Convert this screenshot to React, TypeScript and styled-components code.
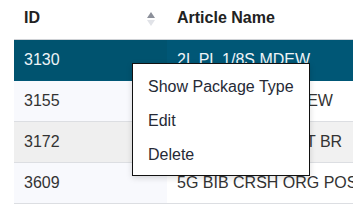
import styled, { createGlobalStyle } from "styled-components";

const GlobalStyle = createGlobalStyle`
  html, body {
    margin: 0;
    padding: 0;
    background: #fff;
    overflow: hidden;
  }
  body {
    font-family: "Liberation Sans", Arial, sans-serif;
  }
`;

type Row = { id: string; name: string };

const rows: Row[] = [
  { id: "3130", name: "2L PL 1/8S MDEW" },
  { id: "3155", name: "20OZ PL 1/8S MDEW" },
  { id: "3172", name: "20OZ PL 1/8 SQRT BR" },
  { id: "3609", name: "5G BIB CRSH ORG POS MIX" },
];

const SortIcon = () => (
  <svg width="8" height="16" viewBox="0 0 8 16">
    <polygon points="4,1 8,7 0,7" fill="#8c909a" />
    <polygon points="0,9 8,9 4,15" fill="#e1e3e8" />
  </svg>
);

const App = () => {
  return (
    <Page>
      <GlobalStyle />
      <Table>
        <HeaderRow>
          <HeadCell>
            ID
            <SortIcon />
          </HeadCell>
          <HeadCell>Article Name</HeadCell>
        </HeaderRow>
        {rows.map((r, i) => (
          <BodyRow key={r.id} $selected={i === 0} $hover={i === 2}>
            <IdCell>{r.id}</IdCell>
            <NameCell>{r.name}</NameCell>
          </BodyRow>
        ))}
        <Menu>
          <MenuItem>Show Package Type</MenuItem>
          <MenuItem>Edit</MenuItem>
          <MenuItem>Delete</MenuItem>
        </Menu>
      </Table>
    </Page>
  );
};

export default App;

const Page = styled.div`
  padding-left: 14px;
  width: 600px;
`;

const Table = styled.div`
  position: relative;
  width: 520px;
  font-size: 16px;
  color: #333;
`;

const HeaderRow = styled.div`
  display: grid;
  grid-template-columns: 153px 1fr;
  height: 39px;
  border-bottom: 1px solid #cfd2d6;
`;

const HeadCell = styled.div`
  display: flex;
  align-items: center;
  justify-content: space-between;
  padding: 0 12px 3px 10px;
  font-weight: 700;
  color: #222;
  svg {
    margin-top: 1px;
  }
`;

const BodyRow = styled.div<{ $selected?: boolean; $hover?: boolean }>`
  display: grid;
  grid-template-columns: 153px 1fr;
  height: 40px;
  border-bottom: 1px solid
    ${(p) => (p.$selected ? "#005776" : "#dcdee2")};
  background: ${(p) =>
    p.$selected ? "#005776" : p.$hover ? "#f1f1f1" : "#fff"};
  color: ${(p) => (p.$selected ? "#eef4f7" : "#333")};
  & > div:first-child {
    background: ${(p) =>
      p.$selected ? "#00536f" : p.$hover ? "#efefef" : "#f8f9fd"};
  }
`;

const IdCell = styled.div`
  display: flex;
  align-items: center;
  padding-left: 10px;
`;

const NameCell = styled.div`
  display: flex;
  align-items: center;
  padding-left: 10px;
  white-space: nowrap;
`;

const Menu = styled.div`
  position: absolute;
  left: 118px;
  top: 63px;
  width: 176px;
  padding: 6px 0 3px;
  background: #fff;
  border: 1px solid #111;
  box-shadow: 0 2px 6px rgba(0, 0, 0, 0.15);
  display: flex;
  flex-direction: column;
`;

const MenuItem = styled.div`
  height: 34px;
  display: flex;
  align-items: center;
  padding-left: 15px;
  color: #262a36;
  font-size: 16px;
`;
